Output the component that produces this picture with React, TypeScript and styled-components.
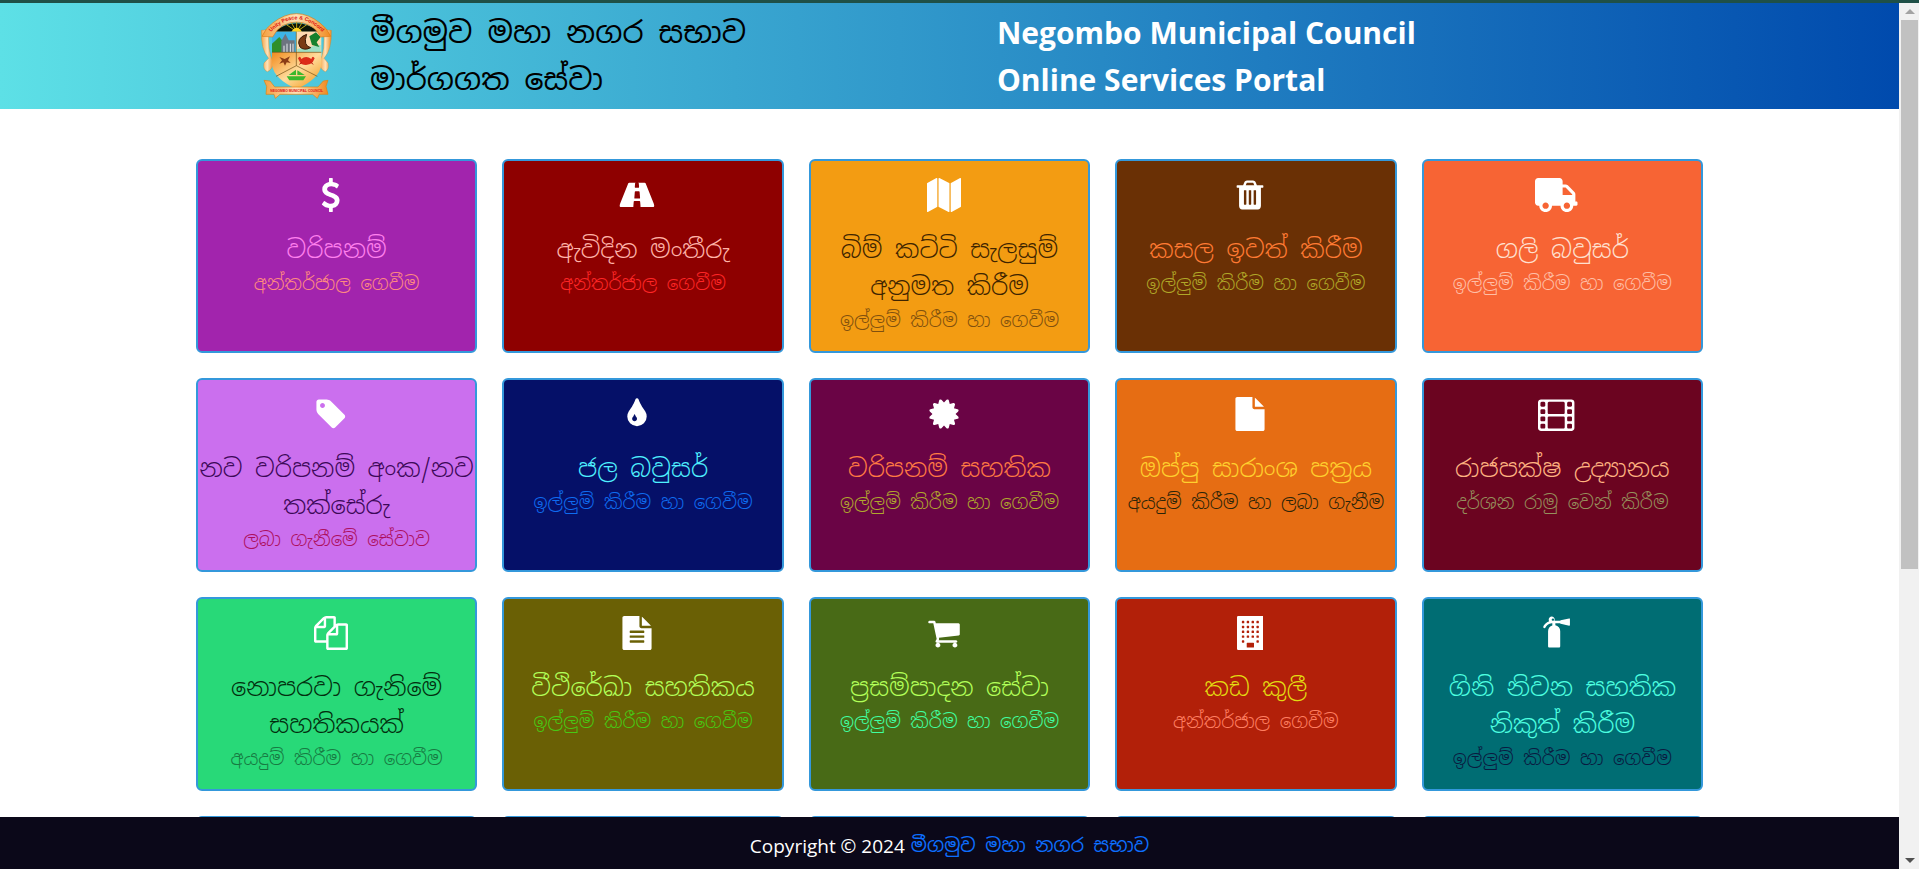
import React from "react";
import styled, { createGlobalStyle } from "styled-components";

const GlobalStyle = createGlobalStyle`
  *, *::before, *::after { box-sizing: border-box; }
  body { margin: 0; background: #fff; }
`;

const sans = `"Segoe UI", "Open Sans", "Noto Sans", sans-serif`;
const sinhala = `"Nirmala UI", "Noto Sans Sinhala", "Iskoola Pota", "Open Sans", sans-serif`;

const Shell = styled.div`
  display: flex;
  flex-direction: column;
  height: 100vh;
  overflow: hidden;
  font-family: ${sans};
`;

const TopLine = styled.div`
  flex: none;
  height: 3px;
  background: #1f5047;
`;

const Body = styled.div`
  flex: 1;
  min-height: 0;
  display: flex;
`;

const Page = styled.div`
  flex: 1;
  min-width: 0;
  display: flex;
  flex-direction: column;
`;

const Header = styled.header`
  flex: none;
  height: 106px;
  background: linear-gradient(90deg, #5de0e6, #004aad);
`;

const HeaderInner = styled.div`
  width: 80%;
  height: 100%;
  margin: 0 auto;
  display: grid;
  grid-template-columns: 180px 627fr 712fr;
  align-items: center;
`;

const LogoLink = styled.a`
  justify-self: end;
  margin-right: 38px;
  display: block;
  line-height: 0;
`;

const SinhalaTitle = styled.h1`
  margin: 0;
  font-family: ${sinhala};
  font-size: 30px;
  line-height: 47px;
  font-weight: 400;
  color: #000;
`;

const EnglishTitle = styled.p`
  margin: 0;
  font-size: 30px;
  line-height: 47px;
  font-weight: 700;
  color: #fff;
`;

const Main = styled.main`
  flex: 1;
  min-height: 0;
  overflow: hidden;
  padding-top: 50px;
`;

const Grid = styled.div`
  width: 80%;
  margin: 0 auto;
  padding: 0 6px;
  display: grid;
  grid-template-columns: repeat(5, minmax(0, 1fr));
  grid-auto-rows: 194px;
  gap: 25px;
`;

const Card = styled.a<{ $bg: string }>`
  display: block;
  padding-top: 17px;
  border: 2px solid #3498db;
  border-radius: 6px;
  background: ${(p) => p.$bg};
  text-align: center;
  text-decoration: none;
`;

const IconRow = styled.span`
  display: flex;
  justify-content: center;
  height: 34px;
  padding-right: 12px;
  margin-bottom: 19px;
  color: #fff;

  svg { display: block; height: 34px; width: auto; fill: currentColor; }
`;

const CardTitle = styled.span<{ $color: string }>`
  display: block;
  font-family: ${sinhala};
  font-size: 25px;
  font-weight: 300;
  line-height: 37px;
  color: ${(p) => p.$color};
`;

const CardNote = styled.span<{ $color: string }>`
  display: block;
  font-family: ${sinhala};
  font-size: 19px;
  font-weight: 300;
  line-height: 31px;
  white-space: nowrap;
  color: ${(p) => p.$color};
`;

const Footer = styled.footer`
  flex: none;
  height: 52px;
  display: flex;
  align-items: center;
  justify-content: center;
  gap: 6px;
  padding-bottom: 2px;
  padding-top: 8px;
  background: #0b0819;
  color: #fff;
  font-size: 19px;
  line-height: 30px;
`;

const FooterLink = styled.a`
  color: #0d6efd;
  font-family: ${sinhala};
  text-decoration: none;
`;

const ScrollBar = styled.div`
  flex: none;
  width: 20px;
  padding: 0 1px 0 2px;
  display: flex;
  flex-direction: column;
  background: #f1f1f1;
`;

const ScrollArrow = styled.span<{ $down?: boolean }>`
  flex: none;
  height: 17px;
  display: flex;
  align-items: center;
  justify-content: center;

  &::before {
    content: "";
    border: 5px solid transparent;
    border-top: ${(p) => (p.$down ? "5px solid #505050" : "0")};
    border-bottom: ${(p) => (p.$down ? "0" : "5px solid #a3a3a3")};
  }
`;

const ScrollTrack = styled.div`
  flex: 1;
`;

const ScrollThumb = styled.div`
  height: 66%;
  background: #c1c1c1;
`;

const Glyph = ({ d, w = 1792, h = 1792 }: { d: string; w?: number; h?: number }) => (
  <svg viewBox={`0 0 ${w} ${h}`} aria-hidden="true">
    <path fillRule="evenodd" d={d} />
  </svg>
);

const hole =
  "v-128q0-26-19-45t-45-19h-128q-26 0-45 19t-19 45v128q0 26 19 45t45 19h128q26 0 45-19t19-45z";
const frame =
  "v-512q0-26-19-45t-45-19h-768q-26 0-45 19t-19 45v512q0 26 19 45t45 19h768q26 0 45-19t19-45z";

const pane = (x: number, y: number) =>
  `M${x + 32} ${y}h64q32 0 32 32v64q0 32-32 32h-64q-32 0-32-32v-64q0-32 32-32z`;
const panes = [256, 512, 768, 1024]
  .flatMap((y) => [256, 512, 768, 1024].map((x) => pane(x, y)))
  .concat(pane(256, 1280), pane(1024, 1280))
  .join("");

const icons = {
  dollar: (
    <Glyph
      w={1024}
      d="M978 1185q0 153-99.500 263.500t-258.500 136.500v175q0 14-9 23t-23 9h-135q-13 0-22.500-9.500t-9.500-22.500v-175q-66-9-127.500-31t-101.500-44.500-74-48-46.500-37.500-17.500-18q-17-21-2-41l103-135q7-10 23-12 15-2 24 9l2 2q113 99 243 125 37 8 74 8 81 0 142.500-43t61.500-122q0-28-15-53t-33.500-42-58.500-37.500-66-32-80-32.500q-39-16-61.500-25t-61.500-26.500-62.500-31-56.500-35.500-53.500-42.500-43.500-49-35.500-58-21-66.500-8.500-78q0-138 98-242t255-134v-180q0-13 9.500-22.500t22.500-9.500h135q14 0 23 9t9 23v176q57 6 110.500 23t87 33.500 63.500 37.500 39 29 15 14q17 18 5 38l-81 146q-8 15-23 16-14 3-27-7-3-3-14.500-12t-39-26.500-58.500-32-74.500-26-85.500-11.500q-95 0-155 43t-60 111q0 26 8.500 48t29.500 41.500 39.500 33 56 31 60.500 27 70 27.500q53 20 81 31.500t76 35 75.500 42.500 62 50 53 63.500 31.500 76.500 13 94z"
    />
  ),
  road: (
    <Glyph
      w={1920}
      d="M1111 1057v-4l-24-320q-1-13-11-22.500t-23-9.500h-186q-13 0-23 9.500t-11 22.500l-24 320v4q-1 12 8 20t21 8h244q12 0 21-8t8-20zm745 405q0 73-46 73h-704q13 0 22-9.500t8-22.500l-20-256q-1-13-11-22.500t-23-9.500h-272q-13 0-23 9.500t-11 22.500l-20 256q-1 13 8 22.500t22 9.500h-704q-46 0-46-73 0-54 26-116l417-1044q8-19 26-33t38-14h339q-13 0-23 9.500t-11 22.500l-15 192q-1 14 8 23t22 9h166q13 0 22-9t8-23l-15-192q-1-13-11-22.500t-23-9.500h339q20 0 38 14t26 33l417 1044q26 62 26 116z"
    />
  ),
  map: (
    <Glyph d="M512 0q13 0 22.500 9.500t9.500 22.500v1472q0 20-17 28l-480 256q-7 4-15 4-13 0-22.500-9.500t-9.500-22.500v-1472q0-20 17-28l480-256q7-4 15-4zm1248 0q13 0 22.500 9.500t9.500 22.500v1472q0 20-17 28l-480 256q-7 4-15 4-13 0-22.500-9.500t-9.500-22.500v-1472q0-20 17-28l480-256q7-4 15-4zm-1120 0q8 0 14 3l512 256q18 10 18 29v1472q0 13-9.500 22.500t-22.500 9.500q-8 0-14-3l-512-256q-18-10-18-29v-1472q0-13 9.500-22.500t22.500-9.500z" />
  ),
  trash: (
    <Glyph d="M704 1376v-704q0-14-9-23t-23-9h-64q-14 0-23 9t-9 23v704q0 14 9 23t23 9h64q14 0 23-9t9-23zm256 0v-704q0-14-9-23t-23-9h-64q-14 0-23 9t-9 23v704q0 14 9 23t23 9h64q14 0 23-9t9-23zm256 0v-704q0-14-9-23t-23-9h-64q-14 0-23 9t-9 23v704q0 14 9 23t23 9h64q14 0 23-9t9-23zm-544-992h448l-48-117q-7-9-17-11h-317q-10 2-17 11zm928 32v64q0 14-9 23t-23 9h-96v948q0 83-47 143.500t-113 60.500h-832q-66 0-113-58.500t-47-141.500v-952h-96q-14 0-23-9t-9-23v-64q0-14 9-23t23-9h309l70-167q15-37 54-63t79-26h320q40 0 79 26t54 63l70 167h309q14 0 23 9t9 23z" />
  ),
  truck: (
    <Glyph
      w={640}
      h={512}
      d="M624 352h-16V243.900c0-12.700-5.100-24.900-14.100-33.900L494 110.100c-9-9-21.200-14.100-33.900-14.100H416V48c0-26.500-21.500-48-48-48H48C21.500 0 0 21.500 0 48v320c0 26.500 21.500 48 48 48h16c0 53 43 96 96 96s96-43 96-96h128c0 53 43 96 96 96s96-43 96-96h48c8.800 0 16-7.200 16-16v-32c0-8.800-7.200-16-16-16zM160 464c-26.500 0-48-21.500-48-48s21.500-48 48-48 48 21.500 48 48-21.500 48-48 48zm320 0c-26.500 0-48-21.500-48-48s21.500-48 48-48 48 21.500 48 48-21.500 48-48 48zm80-208H416V144h44.100l99.900 99.900V256z"
    />
  ),
  tag: (
    <Glyph d="M576 448q0-53-37.500-90.500t-90.500-37.500-90.500 37.500-37.500 90.500 37.500 90.500 90.500 37.500 90.500-37.500 37.500-90.500zm1067 576q0 53-37 90l-491 492q-39 37-91 37-53 0-90-37l-715-716q-38-37-64.500-101t-26.500-117v-416q0-52 38-90t90-38h416q53 0 117 26.500t102 64.500l715 714q37 39 37 91z" />
  ),
  drop: (
    <Glyph d="M896 1152q0-36-20-69-1-1-15.500-22.500t-25.500-38-25-44-21-50.500q-4-16-21-16t-21 16q-7 23-21 50.500t-25 44-25.500 38-15.500 22.500q-20 33-20 69 0 53 37.500 90.500t90.500 37.500 90.500-37.500 37.500-90.500zm512-128q0 212-150 362t-362 150-362-150-150-362q0-145 81-275 6-9 62.500-90.500t101-151 99.500-178 83-201.500q9-30 34-47t51-17 51.500 17 33.500 47q28 93 83 201.500t99.500 178 101 151 62.500 90.500q81 127 81 275z" />
  ),
  certificate: (
    <Glyph d="M1504 896l138 135q30 28 20 70-12 41-52 51l-188 48 53 186q12 41-19 70-29 31-70 19l-186-53-48 188q-10 40-51 52-12 2-19 2-31 0-51-22l-135-138-135 138q-28 30-70 20-41-11-51-52l-48-188-186 53q-41 12-70-19-31-29-19-70l53-186-188-48q-40-10-52-51-10-42 20-70l138-135-138-135q-30-28-20-70 12-41 52-51l188-48-53-186q-12-41 19-70 29-31 70-19l186 53 48-188q10-41 51-51 41-12 70 19l135 139 135-139q29-30 70-19 41 10 51 51l48 188 186-53q41-12 70 19 31 29 19 70l-53 186 188 48q40 10 52 51 10 42-20 70z" />
  ),
  file: (
    <Glyph d="M1152 512v-472q22 14 36 28l408 408q14 14 28 36h-472zm-128 32q0 40 28 68t68 28h544v1056q0 40-28 68t-68 28h-1344q-40 0-68-28t-28-68v-1600q0-40 28-68t68-28h800v544z" />
  ),
  film: (
    <Glyph
      w={1920}
      d={
        [1600, 1216, 832, 448].map((y) => `M384 ${y}${hole}M1792 ${y}${hole}`).join("") +
        `M1408 1600${frame}M1408 832${frame}` +
        "M1920 288v1344q0 66-47 113t-113 47h-1600q-66 0-113-47t-47-113v-1344q0-66 47-113t113-47h1600q66 0 113 47t47 113z"
      }
    />
  ),
  copy: (
    <Glyph d="M1696 384q40 0 68 28t28 68v1216q0 40-28 68t-68 28h-960q-40 0-68-28t-28-68v-288h-544q-40 0-68-28t-28-68v-672q0-40 20-88t48-76l408-408q28-28 76-48t88-20h416q40 0 68 28t28 68v328q68-40 128-40h416zm-544 213l-299 299h299v-299zm-640-384l-299 299h299v-299zm196 647l316-316v-416h-384v416q0 40-28 68t-68 28h-416v640h512v-256q0-40 20-88t48-76zm956 804v-1152h-384v416q0 40-28 68t-68 28h-416v640h896z" />
  ),
  fileText: (
    <Glyph d="M1596 476q14 14 28 36h-472v-472q22 14 36 28zm-476 164h544v1056q0 40-28 68t-68 28h-1344q-40 0-68-28t-28-68v-1600q0-40 28-68t68-28h800v544q0 40 28 68t68 28zm160 736v-64q0-14-9-23t-23-9h-704q-14 0-23 9t-9 23v64q0 14 9 23t23 9h704q14 0 23-9t9-23zm0-256v-64q0-14-9-23t-23-9h-704q-14 0-23 9t-9 23v64q0 14 9 23t23 9h704q14 0 23-9t9-23zm0-256v-64q0-14-9-23t-23-9h-704q-14 0-23 9t-9 23v64q0 14 9 23t23 9h704q14 0 23-9t9-23z" />
  ),
  cart: (
    <Glyph d="M704 1536q0 52-38 90t-90 38-90-38-38-90 38-90 90-38 90 38 38 90zm896 0q0 52-38 90t-90 38-90-38-38-90 38-90 90-38 90 38 38 90zm128-1088v512q0 24-16.500 42.500t-40.500 21.500l-1044 122q13 60 13 70 0 16-24 64h920q26 0 45 19t19 45-19 45-45 19h-1024q-26 0-45-19t-19-45q0-11 8-31.500t16-36 21.500-40 15.500-29.500l-177-823h-204q-26 0-45-19t-19-45 19-45 45-19h256q16 0 28.500 6.500t19.500 15.500 13 24.500 8 26 5.500 29.500 4.500 26h1201q26 0 45 19t19 45z" />
  ),
  building: (
    <Glyph
      w={1408}
      d={`M64 0h1280q64 0 64 64v1664q0 64-64 64h-1280q-64 0-64-64v-1664q0-64 64-64z${panes}M544 1408h320q32 0 32 32v192q0 32-32 32h-320q-32 0-32-32v-192q0-32 32-32z`}
    />
  ),
  extinguisher: (
    <Glyph
      w={1536}
      d="M640 192q0-26-19-45t-45-19-45 19-19 45 19 45 45 19 45-19 19-45zm832-32v320q0 16-12 25-8 7-20 7-4 0-7-1l-448-96q-11-2-18-11t-7-20h-256v102q111 23 183.500 111t72.500 203v800q0 26-19 45t-45 19h-512q-26 0-45-19t-19-45v-800q0-106 62.500-190.500t161.500-114.500v-111h-32q-59 0-115 23.500t-91.500 53-66 66.500-40.500 53.500-14 24.500q-17 35-57 35-16 0-29-7-23-12-31.500-37t3.500-49q5-10 14.500-26t37.500-53.500 60.500-70 85-67 108.500-52.500q-25-42-25-86 0-66 47-113t113-47 113 47 47 113q0 33-14 64h302q0-11 7-20t18-11l448-96q3-1 7-1 12 0 20 7 12 9 12 25z"
    />
  ),
};

type Service = {
  icon: keyof typeof icons;
  bg: string;
  title: string;
  titleColor: string;
  note: string;
  noteColor: string;
};

const services: Service[] = [
  { icon: "dollar", bg: "#a224ad", title: "වරිපනම්", titleColor: "#ff80ee", note: "අන්තර්ජාල ගෙවීම", noteColor: "#ff8a80" },
  { icon: "road", bg: "#8e0000", title: "ඇවිදින මංතීරු", titleColor: "#ffb3a8", note: "අන්තර්ජාල ගෙවීම", noteColor: "#ff2626" },
  { icon: "map", bg: "#f39c12", title: "බිම් කට්ටි සැලසුම් අනුමත කිරීම", titleColor: "#3e2400", note: "ඉල්ලුම් කිරීම හා ගෙවීම", noteColor: "#80500e" },
  { icon: "trash", bg: "#6a3005", title: "කසල ඉවත් කිරීම", titleColor: "#ff7a33", note: "ඉල්ලුම් කිරීම හා ගෙවීම", noteColor: "#b0a728" },
  { icon: "truck", bg: "#f76434", title: "ගලි බවුසර්", titleColor: "#ffe0d0", note: "ඉල්ලුම් කිරීම හා ගෙවීම", noteColor: "#ffbfa6" },
  { icon: "tag", bg: "#cb6fee", title: "නව වරිපනම් අංක/නව තක්සේරු", titleColor: "#3c0858", note: "ලබා ගැනීමේ සේවාව", noteColor: "#ad0f60" },
  { icon: "drop", bg: "#051068", title: "ජල බවුසර්", titleColor: "#4ff0ff", note: "ඉල්ලුම් කිරීම හා ගෙවීම", noteColor: "#0f6cf0" },
  { icon: "certificate", bg: "#6a0445", title: "වරිපනම් සහතික", titleColor: "#ff7a43", note: "ඉල්ලුම් කිරීම හා ගෙවීම", noteColor: "#b0a72e" },
  { icon: "file", bg: "#e66d13", title: "ඔප්පු සාරාංශ පත්‍රය", titleColor: "#ffd02e", note: "අයදුම් කිරීම හා ලබා ගැනීම", noteColor: "#2a2408" },
  { icon: "film", bg: "#6b0420", title: "රාජපක්ෂ උද්‍යානය", titleColor: "#ffb380", note: "දර්ශන රාමු වෙන් කිරීම", noteColor: "#96905c" },
  { icon: "copy", bg: "#28d978", title: "නොපරවා ගැනිමේ සහතිකයක්", titleColor: "#022e0e", note: "අයදුම් කිරීම හා ගෙවීම", noteColor: "#177a42" },
  { icon: "fileText", bg: "#6a6005", title: "වීථිරේඛා සහතිකය", titleColor: "#b2ff59", note: "ඉල්ලුම් කිරීම හා ගෙවීම", noteColor: "#48c814" },
  { icon: "cart", bg: "#486a16", title: "ප්‍රසම්පාදන සේවා", titleColor: "#b2ff59", note: "ඉල්ලුම් කිරීම හා ගෙවීම", noteColor: "#40ffa0" },
  { icon: "building", bg: "#b22009", title: "කඩ කුලී", titleColor: "#e2da12", note: "අන්තර්ජාල ගෙවීම", noteColor: "#ff7e60" },
  { icon: "extinguisher", bg: "#006d73", title: "ගිනි නිවන සහතික නිකුත් කිරීම", titleColor: "#4dffe0", note: "ඉල්ලුම් කිරීම හා ගෙවීම", noteColor: "#0a1a40" },
];

const moreServices = ["#3498db", "#3498db", "#3498db", "#3498db", "#3498db"];

const Crest = () => (
  <svg width="72" height="86" viewBox="18 20 216 258" role="img" aria-label="Negombo Municipal Council crest">
    <defs>
      <linearGradient id="gold" x1="0" y1="0" x2="1" y2="1">
        <stop offset="0" stopColor="#f28a1c" />
        <stop offset="0.5" stopColor="#ffdc9c" />
        <stop offset="1" stopColor="#f0930f" />
      </linearGradient>
      <linearGradient id="ribbon" x1="0" y1="0" x2="1" y2="0">
        <stop offset="0" stopColor="#f5a040" />
        <stop offset="0.5" stopColor="#ffe2b8" />
        <stop offset="1" stopColor="#f08a20" />
      </linearGradient>
      <path id="motto" d="M44 84Q128 -6 212 84" />
    </defs>
    <path d="M22 72Q20 130 44 156L30 170Q26 190 40 196Q56 190 58 168Q38 130 46 70z" fill="url(#ribbon)" stroke="#d87a18" />
    <path d="M232 72Q234 130 210 156L222 170Q226 190 214 196Q198 190 196 168Q216 130 208 70z" fill="url(#ribbon)" stroke="#d87a18" />
    <path d="M58 78Q128 24 198 78z" fill="#0c1406" />
    <path d="M128 76L96 54M128 76L110 46M128 76V42M128 76L146 46M128 76L160 54" stroke="#b8a418" strokeWidth="3" />
    <path d="M112 76Q128 52 144 76z" fill="#ffd21f" />
    <path d="M54 76H202V150H54z" fill="#dff0c4" />
    <path d="M54 76H126V138H54z" fill="#3db4e6" />
    <path d="M54 112L76 92L96 116V138H54z" fill="#2f8f2a" />
    <path d="M82 138V104L94 82L104 102H122V138z" fill="#6d7480" />
    <path d="M90 138V118M99 138V112M109 138V112M117 138V112" stroke="#e8ecf0" strokeWidth="3" />
    <path d="M130 76H200V138H130z" fill="#ffd9b0" />
    <path d="M130 128L200 116V138H130z" fill="#9ee0c4" />
    <path d="M158 84Q124 96 138 122Q150 134 170 124Q146 118 158 84z" fill="#7a3a14" stroke="#3c1c08" strokeWidth="3" />
    <path d="M166 90L186 78L200 92L188 108L196 122L174 116z" fill="#16802c" />
    <path d="M54 138H202V176Q196 218 128 248Q60 218 54 176z" fill="url(#gold)" />
    <path d="M127 76V178M54 138H202M66 210L127 178L190 210" fill="none" stroke="#6e4b10" strokeWidth="2" />
    <path d="M76 152L92 158L108 150L102 162L110 170L98 168L93 178L88 168L76 172L84 162z" fill="#8a3c16" />
    <path d="M132 156Q138 146 142 158Q156 146 172 158Q176 146 182 156L176 168Q168 176 156 176Q142 176 138 168z" fill="#dc2c18" />
    <path d="M136 174L144 168M178 174L170 168" stroke="#b81e10" strokeWidth="3" />
    <path d="M98 210H156L148 222H106zM104 206L126 190V206zM130 206V192L152 206z" fill="#3cb82c" />
    <path d="M38 240L30 222L48 224L62 242H192L208 224L222 222L216 240L222 264H196L190 276L176 264H78L64 276L60 264H36z" fill="url(#ribbon)" stroke="#e0840c" strokeWidth="2" />
    <path d="M24 90Q34 66 56 50Q128 -6 198 50Q220 66 230 90L200 92Q188 68 168 58Q128 36 86 58Q68 68 56 92z" fill="url(#ribbon)" stroke="#e07a14" strokeWidth="2" />
    <text fontFamily="Liberation Sans, sans-serif" fontSize="16" fontWeight="700" fill="#e01212">
      <textPath href="#motto" startOffset="50%" textAnchor="middle">Unity Peace &amp; Concord</textPath>
    </text>
    <text x="128" y="257" textAnchor="middle" fontFamily="Liberation Sans, sans-serif" fontSize="10" fontWeight="700" fill="#e01212">
      NEGOMBO MUNICIPAL COUNCIL
    </text>
  </svg>
);

export default function App() {
  return (
    <>
      <GlobalStyle />
      <Shell>
        <TopLine />
        <Body>
          <Page>
            <Header>
              <HeaderInner>
                <LogoLink href="#">
                  <Crest />
                </LogoLink>
                <SinhalaTitle lang="si">
                  මීගමුව මහා නගර සභාව
                  <br />
                  මාර්ගගත සේවා
                </SinhalaTitle>
                <EnglishTitle>
                  Negombo Municipal Council
                  <br />
                  Online Services Portal
                </EnglishTitle>
              </HeaderInner>
            </Header>
            <Main>
              <Grid lang="si">
                {services.map((s) => (
                  <Card key={s.icon} href="#" $bg={s.bg}>
                    <IconRow>{icons[s.icon]}</IconRow>
                    <CardTitle $color={s.titleColor}>{s.title}</CardTitle>
                    <CardNote $color={s.noteColor}>{s.note}</CardNote>
                  </Card>
                ))}
                {moreServices.map((bg, i) => (
                  <Card key={i} href="#" $bg={bg} />
                ))}
              </Grid>
            </Main>
            <Footer>
              <span>Copyright © 2024</span>
              <FooterLink href="#" lang="si">
                මීගමුව මහා නගර සභාව
              </FooterLink>
            </Footer>
          </Page>
          <ScrollBar aria-hidden="true">
            <ScrollArrow />
            <ScrollTrack>
              <ScrollThumb />
            </ScrollTrack>
            <ScrollArrow $down />
          </ScrollBar>
        </Body>
      </Shell>
    </>
  );
}
